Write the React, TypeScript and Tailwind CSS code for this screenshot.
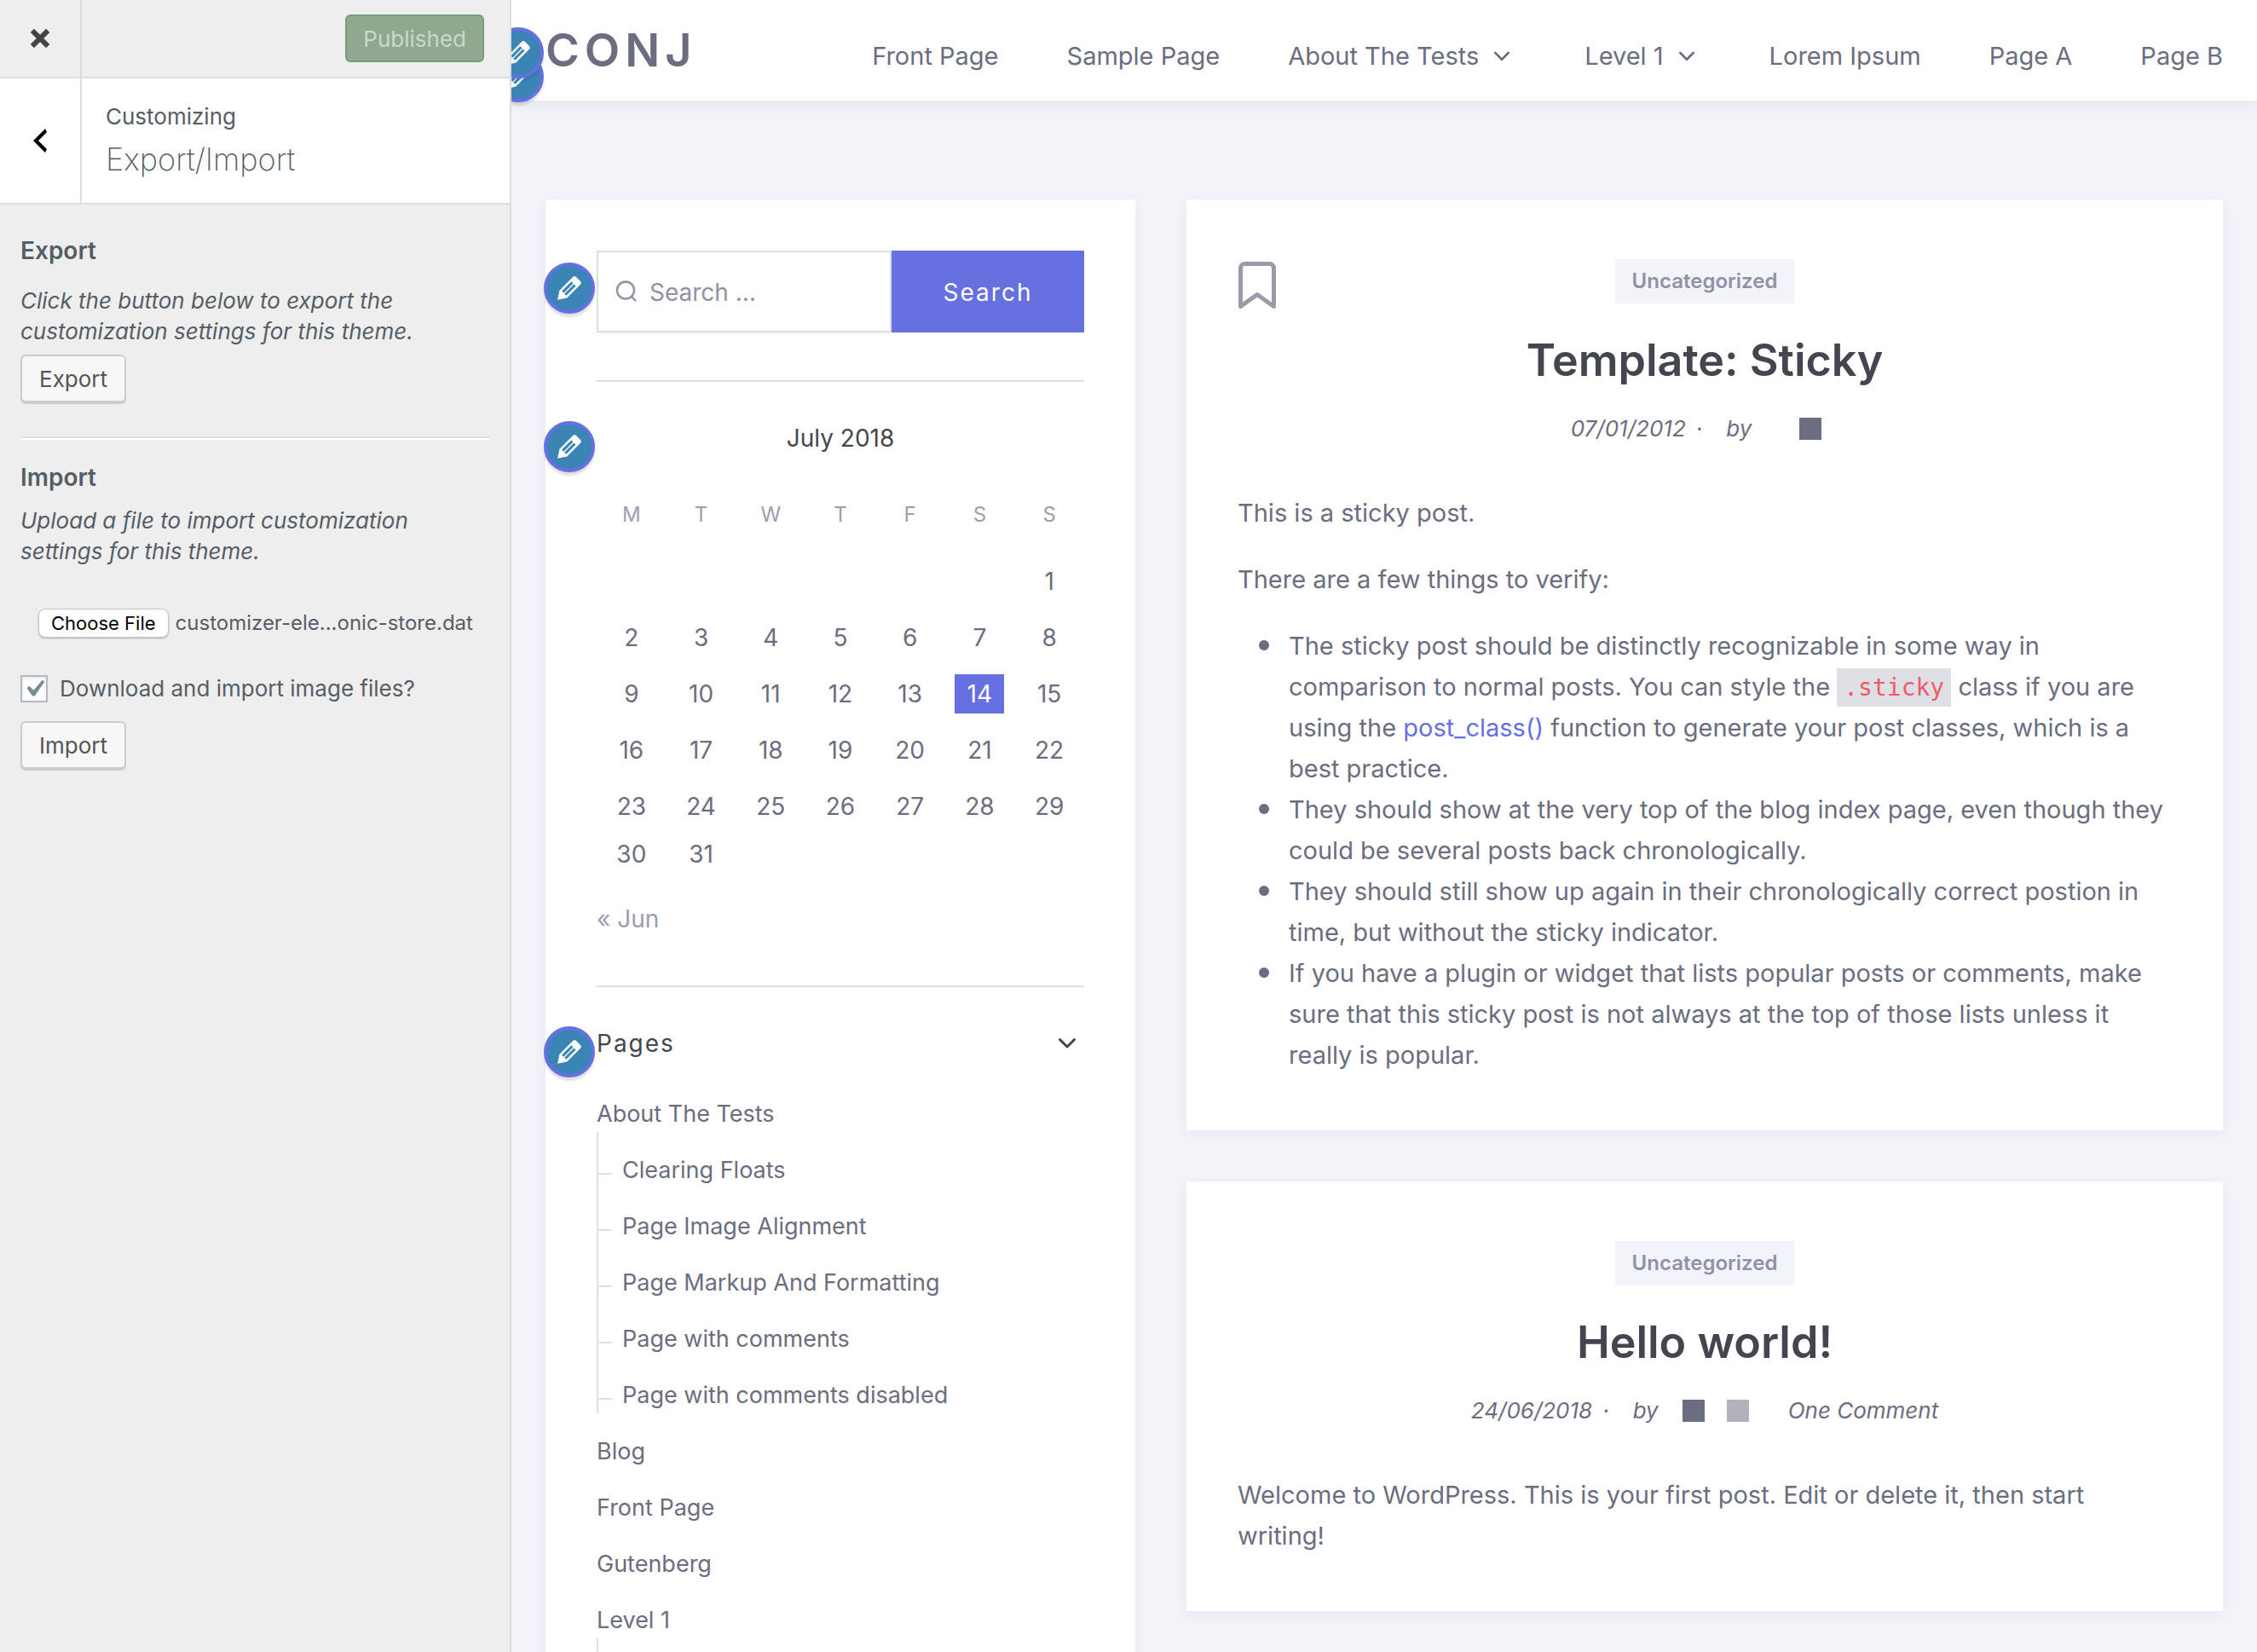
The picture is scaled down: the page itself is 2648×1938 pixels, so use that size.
import type { ReactNode } from "react";

function EditButton({ label, className }: { label: string; className: string }) {
  return (
    <button
      type="button"
      aria-label={label}
      className={
        "absolute flex size-[60px] items-center justify-center rounded-full border-4 border-[#6670e0] bg-[#3a84b6] text-white shadow-[0_4px_2px_rgba(46,68,83,0.15)] " +
        className
      }
    >
      <svg viewBox="0 0 20 20" className="size-10 shrink-0" fill="currentColor" aria-hidden="true">
        <path d="M13.89 3.39l2.71 2.72c.46.46.42 1.24.03 1.64l-8.01 8.02-5.56 1.16 1.16-5.58s7.6-7.63 7.99-8.03c.39-.39 1.22-.39 1.68.07zm-2.73 2.79l-5.59 5.61 1.11 1.11 5.54-5.65zm-2.97 8.23l5.58-5.6-1.07-1.08-5.59 5.6z" />
      </svg>
    </button>
  );
}

function Chevron({ className }: { className: string }) {
  return (
    <svg viewBox="0 0 24 16" className={className} fill="none" stroke="currentColor" strokeWidth="3" strokeLinecap="round" strokeLinejoin="round" aria-hidden="true">
      <path d="M3.500 3.500l8.500 8.500 8.500-8.500" />
    </svg>
  );
}

function PanelButton({ children, className }: { children: ReactNode; className: string }) {
  return (
    <button
      type="button"
      className={
        "block h-14 rounded-md border-2 border-[#ccc] bg-[#f7f7f7] px-5 pt-0.5 text-[26px] leading-9 text-[#555] shadow-[0_2px_0_#ccc] " +
        className
      }
    >
      {children}
    </button>
  );
}

function CustomizerPanel() {
  return (
    <aside className="flex w-[600px] shrink-0 flex-col border-r-2 border-[#ddd] bg-[#eee] text-[26px] leading-9 text-[#555d66]">
      <div className="flex h-[92px] items-stretch border-b-2 border-[#ddd]">
        <button type="button" aria-label="Close" className="flex w-24 items-center justify-center border-r-2 border-[#ddd] text-[#444]">
          <svg viewBox="0 0 20 20" className="size-10" fill="currentColor" aria-hidden="true">
            <path d="M12.120 10l3.530 3.530-2.120 2.120L10 12.120l-3.540 3.540-2.120-2.120L7.880 10 4.340 6.460l2.120-2.120L10 7.880l3.540-3.530 2.120 2.120z" />
          </svg>
        </button>
        <div className="flex flex-1 items-center justify-end pr-[30px]">
          <button type="button" disabled className="h-14 rounded-md border-2 border-[#7a9c7b] bg-[#8fa88f] px-[19px] pt-0.5 text-[26px] leading-9 text-[#ccd6cc]">
            Published
          </button>
        </div>
      </div>

      <div className="flex h-[148px] items-stretch border-b-2 border-[#ddd] bg-white">
        <button type="button" aria-label="Back" className="flex w-24 items-center justify-center border-r-2 border-[#ddd] text-black">
          <svg viewBox="0 0 20 20" className="size-10" fill="currentColor" aria-hidden="true">
            <path d="M14 5l-5 5 5 5-1 2-7-7 7-7z" />
          </svg>
        </button>
        <div className="flex flex-col justify-center pl-7">
          <p>Customizing</p>
          <h1 className="mt-2 text-[36px] leading-[48px] font-extralight">Export/Import</h1>
        </div>
      </div>

      <div className="px-6 pt-9">
        <h2 className="text-[28px] leading-9 font-semibold">Export</h2>
        <p className="mt-[23px] italic">Click the button below to export the customization settings for this theme.</p>
        <PanelButton className="mt-[9px]">Export</PanelButton>
        <hr className="mt-10 h-1 border-t-2 border-b-2 border-t-[#ddd] border-b-white" />
        <h2 className="mt-[26px] text-[28px] leading-9 font-semibold">Import</h2>
        <p className="mt-[15px] pr-10 italic">Upload a file to import customization settings for this theme.</p>
        <div className="mt-[49px] flex items-center pl-[21px]">
          <input id="settings-file" type="file" className="sr-only" />
          <label
            htmlFor="settings-file"
            className="flex h-[34px] items-center rounded-lg border border-[#c6c6c6] bg-white px-3.5 text-[22px] text-black shadow-[0_1px_2px_rgba(0,0,0,0.25)]"
          >
            Choose File
          </label>
          <span className="ml-2 text-2xl leading-[34px]">customizer-ele...onic-store.dat</span>
        </div>
        <label className="mt-[42px] flex h-9 items-center gap-3.5">
          <span className="relative flex size-8 shrink-0">
            <input type="checkbox" defaultChecked className="peer size-8 appearance-none border-2 border-[#b4b9be] bg-white shadow-[inset_0_2px_4px_rgba(0,0,0,0.1)]" />
            <svg viewBox="0 0 20 20" className="pointer-events-none absolute -inset-1 hidden size-10 text-[#768b96] peer-checked:block" fill="currentColor" aria-hidden="true">
              <path d="M14.830 4.890l1.340.940-5.810 8.380H9.020L5.780 9.670l1.340-1.250 2.570 2.400z" />
            </svg>
          </span>
          Download and import image files?
        </label>
        <PanelButton className="mt-5">Import</PanelButton>
      </div>
    </aside>
  );
}

const navItems = [
  { label: "Front Page" },
  { label: "Sample Page" },
  { label: "About The Tests", menu: true },
  { label: "Level 1", menu: true },
  { label: "Lorem Ipsum" },
  { label: "Page A" },
  { label: "Page B" },
];

function SiteHeader() {
  return (
    <header className="relative z-10 flex h-[118px] items-center justify-between bg-white px-10 shadow-[0_4px_16px_rgba(50,50,93,0.08)]">
      <EditButton label="Edit site identity" className="top-[60px] -left-[22px]" />
      <EditButton label="Edit logo" className="top-8 -left-[22px]" />
      <a href="#" className="text-[54px] leading-[60px] font-semibold tracking-[6px]">
        CONJ
      </a>
      <nav className="flex items-center gap-20 pt-3.5 text-[29px] leading-9">
        {navItems.map((item) => (
          <a key={item.label} href="#" className="flex items-center whitespace-nowrap">
            {item.label}
            {item.menu && <Chevron className="mr-1.5 ml-4 h-4 w-[22px]" />}
          </a>
        ))}
      </nav>
    </header>
  );
}

const weekdays = ["M", "T", "W", "T", "F", "S", "S"];
const weeks: (number | null)[][] = [
  [null, null, null, null, null, null, 1],
  [2, 3, 4, 5, 6, 7, 8],
  [9, 10, 11, 12, 13, 14, 15],
  [16, 17, 18, 19, 20, 21, 22],
  [23, 24, 25, 26, 27, 28, 29],
  [30, 31, null, null, null, null, null],
];

function Calendar() {
  return (
    <table className="w-full table-fixed border-collapse text-center">
      <caption className="pt-11 pb-12 leading-[44px] text-[#44464f]">July 2018</caption>
      <thead>
        <tr>
          {weekdays.map((day, i) => (
            <th key={i} scope="col" className="p-0 pb-[35px] text-2xl leading-10 font-normal text-[#9c9eb0]">
              {day}
            </th>
          ))}
        </tr>
      </thead>
      <tbody>
        {weeks.map((week, i) => (
          <tr key={i}>
            {week.map((day, j) => (
              <td key={j} className={i === weeks.length - 1 ? "p-0 leading-[26px]" : "p-0 pb-5 leading-[46px]"}>
                {day === 14 ? <span className="mx-auto block w-[58px] bg-[#6670e0] text-white">{day}</span> : day}
              </td>
            ))}
          </tr>
        ))}
      </tbody>
    </table>
  );
}

const pages = [
  {
    label: "About The Tests",
    children: [
      "Clearing Floats",
      "Page Image Alignment",
      "Page Markup And Formatting",
      "Page with comments",
      "Page with comments disabled",
    ],
  },
  { label: "Blog" },
  { label: "Front Page" },
  { label: "Gutenberg" },
  { label: "Level 1", children: [] as string[] },
];

function Sidebar() {
  return (
    <aside className="bg-white px-[60px] pt-[60px] text-[28px] shadow-[0_4px_16px_rgba(50,50,93,0.06)]">
      <section className="relative">
        <EditButton label="Edit search widget" className="top-3.5 -left-[62px]" />
        <form className="flex h-24" onSubmit={(e) => e.preventDefault()}>
          <div className="flex min-w-0 flex-1 items-center border-2 border-[#dcdfe6] pl-5 shadow-[0_2px_4px_rgba(50,50,93,0.06)]">
            <svg viewBox="0 0 26 26" className="size-[26px] shrink-0 text-[#8f91a5]" fill="none" stroke="currentColor" strokeWidth="2.400" strokeLinecap="round" aria-hidden="true">
              <circle cx="12" cy="11.500" r="10" />
              <path d="M19 19l4.500 4.500" />
            </svg>
            <input
              type="search"
              aria-label="Search"
              placeholder="Search …"
              className="ml-3.5 w-full min-w-0 bg-transparent pt-0.5 leading-10 outline-none placeholder:text-[#8f91a5]"
            />
          </div>
          <button type="submit" className="w-[226px] bg-[#6670e0] pt-0.5 tracking-[2px] text-white">
            Search
          </button>
        </form>
      </section>

      <section className="relative mt-14 border-t-2 border-[#dcdfe6]">
        <EditButton label="Edit calendar widget" className="top-[46px] -left-[62px]" />
        <Calendar />
        <a href="#" className="mt-[42px] block leading-[42px] text-[#9c9eb0]">
          « Jun
        </a>
      </section>

      <section className="relative mt-[57px] border-t-2 border-[#dcdfe6]">
        <EditButton label="Edit pages widget" className="top-[46px] -left-[62px]" />
        <h2 className="mt-11">
          <button type="button" className="flex w-full items-center justify-between pr-2 leading-[44px] tracking-[2px] text-[#44464f]">
            Pages
            <Chevron className="h-4 w-6" />
          </button>
        </h2>
        <ul className="mt-10 flex flex-col gap-6 text-[27px] leading-[42px]">
          {pages.map((page) => (
            <li key={page.label}>
              <a href="#" className="block">
                {page.label}
              </a>
              {page.children && (
                <ul className="flex min-h-16 flex-col gap-6 border-l-2 border-[#dcdfe6] pt-6">
                  {page.children.map((child) => (
                    <li key={child} className="relative pl-7 before:absolute before:top-6 before:left-0 before:h-0.5 before:w-4 before:bg-[#dcdfe6]">
                      <a href="#">{child}</a>
                    </li>
                  ))}
                </ul>
              )}
            </li>
          ))}
        </ul>
      </section>
    </aside>
  );
}

function Bullet({ children }: { children: ReactNode }) {
  return (
    <li className="relative before:absolute before:top-[17px] before:-left-[35px] before:size-3 before:rounded-full before:bg-[#6b6d80]">
      {children}
    </li>
  );
}

function Post({ title, meta, sticky, children }: { title: string; meta: ReactNode; sticky?: boolean; children: ReactNode }) {
  return (
    <article className="relative bg-white px-[60px] pt-[70px] pb-16 shadow-[0_4px_16px_rgba(50,50,93,0.06)]">
      {sticky && (
        <svg viewBox="0 0 44 56" className="absolute top-[73px] left-[61px] h-14 w-11 text-[#999ba8]" fill="none" stroke="currentColor" strokeWidth="5" strokeLinejoin="round" role="img" aria-label="Sticky">
          <path d="M2.500 52.500V7.500a5 5 0 0 1 5-5h29a5 5 0 0 1 5 5v45L22 38.500z" />
        </svg>
      )}
      <div className="flex flex-col items-center">
        <a href="#" className="bg-[#f3f4fa] px-5 text-2xl leading-[52px] font-semibold text-[#8f91a5]">
          Uncategorized
        </a>
        <h2 className="mt-[35px] text-[52px] leading-[64px] font-semibold text-[#44464f]">{title}</h2>
        <div className="mt-[30px] flex h-9 items-center text-[26px] leading-9 italic">{meta}</div>
      </div>
      <div className="mt-[57px] flex flex-col gap-[30px] text-[29px] leading-[48px]">{children}</div>
    </article>
  );
}

export default function App() {
  return (
    <div className="flex h-screen overflow-hidden bg-[#f3f4fa] font-['Inter',sans-serif] text-[#6b6d80]">
      <CustomizerPanel />
      <div className="relative min-w-0 flex-1 overflow-hidden">
        <SiteHeader />
        <div className="grid grid-cols-[692fr_1216fr] gap-[60px] px-10 pt-[116px]">
          <Sidebar />
          <main className="flex flex-col gap-[60px]">
            <Post
              sticky
              title="Template: Sticky"
              meta={
                <>
                  <a href="#">07/01/2012</a>
                  <span className="ml-3">·</span>
                  <span className="ml-7">by</span>
                  <span className="mr-5 ml-14 size-[26px] bg-[#6b6d80]" />
                </>
              }
            >
              <p>This is a sticky post.</p>
              <p>There are a few things to verify:</p>
              <ul className="pl-[60px]">
                <Bullet>
                  The sticky post should be distinctly recognizable in some way in comparison to normal posts. You can style the{" "}
                  <code className="bg-[#dedfe4] px-2 py-1.5 font-['DejaVu_Sans_Mono',monospace] text-[28px] leading-none text-[#f05a69]">.sticky</code> class if you are using the{" "}
                  <a href="#" className="text-[#6670e0]">post_class()</a> function to generate your post classes, which is a best practice.
                </Bullet>
                <Bullet>They should show at the very top of the blog index page, even though they could be several posts back chronologically.</Bullet>
                <Bullet>They should still show up again in their chronologically correct postion in time, but without the sticky indicator.</Bullet>
                <Bullet>
                  If you have a plugin or widget that lists popular posts or comments, make sure that this sticky post is not always at the top of those lists unless it really is popular.
                </Bullet>
              </ul>
            </Post>
            <Post
              title="Hello world!"
              meta={
                <>
                  <a href="#">24/06/2018</a>
                  <span className="ml-3">·</span>
                  <span className="ml-7">by</span>
                  <span className="ml-7 size-[26px] bg-[#6b6d80]" />
                  <span className="ml-[26px] size-[26px] bg-[#b2b2bd]" />
                  <a href="#" className="ml-[46px]">One Comment</a>
                </>
              }
            >
              <p>Welcome to WordPress. This is your first post. Edit or delete it, then start writing!</p>
            </Post>
          </main>
        </div>
      </div>
    </div>
  );
}
